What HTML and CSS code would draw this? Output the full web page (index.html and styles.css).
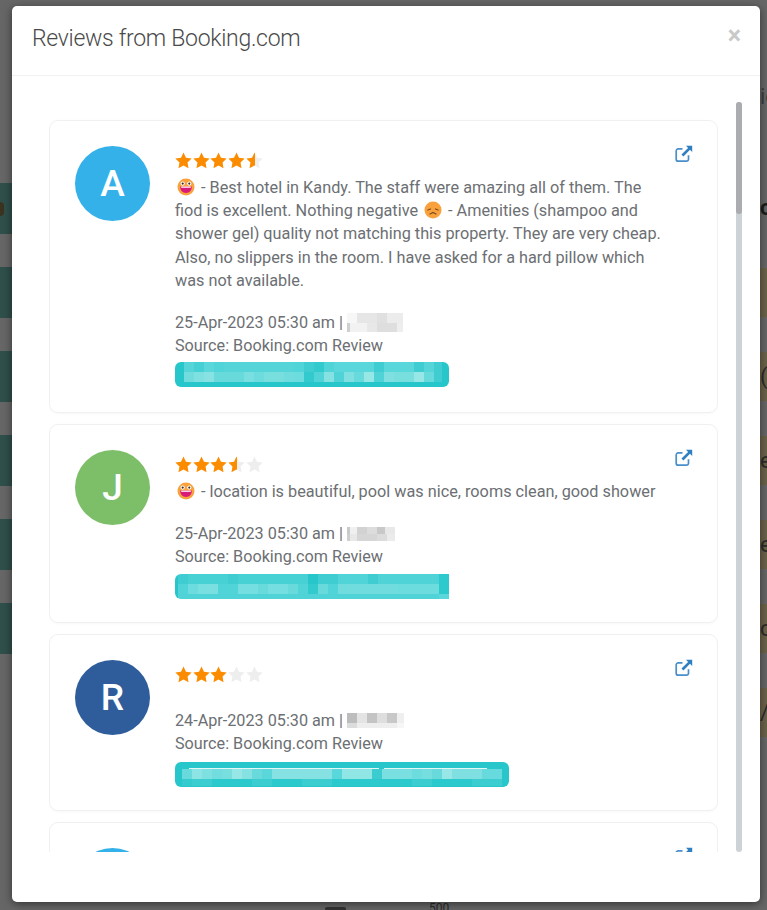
FILE: index.html
```html
<!DOCTYPE html>
<html>
  <head>
    <meta charset="UTF-8">
    <title>Reviews from Booking.com</title>
    <link rel="stylesheet" href="styles.css">
  </head>
  <body>
    <svg class="defs" width="0" height="0">
      <defs>
        <linearGradient id="halfFill">
          <stop offset="50%" stop-color="#fb8c00"></stop>
          <stop offset="50%" stop-color="#eeeeee"></stop>
        </linearGradient>
        <symbol id="star" viewBox="0 0 24 24">
          <path d="M12 .8l3.5 7.4 8 1.1-5.8 5.6 1.4 8L12 19l-7.1 3.9 1.4-8L.5 9.3l8-1.1z"></path>
        </symbol>
        <symbol id="share" viewBox="0 0 18 18">
          <path d="M13.5 10.2v4a2 2 0 0 1-2 2H3.2a2 2 0 0 1-2-2V5.9a2 2 0 0 1 2-2h4.3" fill="none" stroke="#4a8fc9" stroke-width="1.7"></path>
          <path d="M11 .8h6.2V7l-2.2-2.2-6.6 6.6-1.9-1.9 6.6-6.6z" fill="#2f7fc1"></path>
        </symbol>
        <symbol id="happy" viewBox="0 0 18 18">
          <circle cx="9" cy="9" r="8.5" fill="#f9a13c"></circle>
          <circle cx="5.7" cy="5.6" r="2.1" fill="#fff"></circle>
          <circle cx="12.3" cy="5.6" r="2.1" fill="#fff"></circle>
          <circle cx="5.7" cy="5.6" r="1.1" fill="#3a2a2a"></circle>
          <circle cx="12.3" cy="5.6" r="1.1" fill="#3a2a2a"></circle>
          <path d="M3.2 8.6h11.6c0 3.9-2.4 6.4-5.8 6.4s-5.8-2.5-5.8-6.4z" fill="#d81b7a"></path>
          <path d="M4.2 8.6h9.6v1.2H4.2z" fill="#fff"></path>
        </symbol>
        <symbol id="sad" viewBox="0 0 18 18">
          <circle cx="9" cy="9" r="8.5" fill="#f9a13c"></circle>
          <path d="M3.4 9.2L7 7.8M14.6 9.2L11 7.8M5.6 13.2l3.4-1.8 3.4 1.8" fill="none" stroke="#7a4a1c" stroke-width="1.1"></path>
        </symbol>
      </defs>
    </svg>

    <div class="page">
      <div class="stripes stripes-left">
        <div class="stripe"><span class="stripe-dot"></span></div>
        <div class="stripe"></div>
        <div class="stripe"></div>
        <div class="stripe"></div>
        <div class="stripe"></div>
        <div class="stripe"></div>
      </div>
      <div class="stripes stripes-right">
        <div class="peek">io</div>
        <div class="peek peek-head">ch</div>
        <div class="band"></div>
        <div class="band">(</div>
        <div class="band">ev</div>
        <div class="band">e</div>
        <div class="band">c</div>
        <div class="band">/</div>
      </div>
      <div class="page-foot"><span class="foot-chip"></span><span class="foot-num">500</span></div>
    </div>

    <div class="modal">
      <div class="modal-header">
        <h2 class="modal-title">Reviews from Booking.com</h2>
        <span class="modal-close">×</span>
      </div>
      <div class="modal-body">
        <div class="review-list">

          <div class="review">
            <div class="avatar avatar-sky">A</div>
            <div class="review-main">
              <div class="stars">
                <svg class="star on"><use href="#star"></use></svg>
                <svg class="star on"><use href="#star"></use></svg>
                <svg class="star on"><use href="#star"></use></svg>
                <svg class="star on"><use href="#star"></use></svg>
                <svg class="star half"><use href="#star"></use></svg>
              </div>
              <p class="review-text"><svg class="emoji"><use href="#happy"></use></svg> - Best hotel in Kandy. The staff were amazing all of them. The fiod is excellent. Nothing negative <svg class="emoji"><use href="#sad"></use></svg> - Amenities (shampoo and shower gel) quality not matching this property. They are very cheap. Also, no slippers in the room. I have asked for a hard pillow which was not available.</p>
              <div class="review-meta">25-Apr-2023 05:30 am | <span class="smudge smudge-a"></span></div>
              <div class="review-meta">Source: Booking.com Review</div>
              <div class="tag tag-a"></div>
            </div>
            <svg class="share"><use href="#share"></use></svg>
          </div>

          <div class="review">
            <div class="avatar avatar-green">J</div>
            <div class="review-main">
              <div class="stars">
                <svg class="star on"><use href="#star"></use></svg>
                <svg class="star on"><use href="#star"></use></svg>
                <svg class="star on"><use href="#star"></use></svg>
                <svg class="star half"><use href="#star"></use></svg>
                <svg class="star"><use href="#star"></use></svg>
              </div>
              <p class="review-text"><svg class="emoji"><use href="#happy"></use></svg> - location is beautiful, pool was nice, rooms clean, good shower</p>
              <div class="review-meta">25-Apr-2023 05:30 am | <span class="smudge smudge-j"></span></div>
              <div class="review-meta">Source: Booking.com Review</div>
              <div class="tag tag-j"></div>
            </div>
            <svg class="share"><use href="#share"></use></svg>
          </div>

          <div class="review">
            <div class="avatar avatar-navy">R</div>
            <div class="review-main">
              <div class="stars">
                <svg class="star on"><use href="#star"></use></svg>
                <svg class="star on"><use href="#star"></use></svg>
                <svg class="star on"><use href="#star"></use></svg>
                <svg class="star"><use href="#star"></use></svg>
                <svg class="star"><use href="#star"></use></svg>
              </div>
              <div class="review-empty"></div>
              <div class="review-meta">24-Apr-2023 05:30 am | <span class="smudge smudge-r"></span></div>
              <div class="review-meta">Source: Booking.com Review</div>
              <div class="tag tag-r"></div>
            </div>
            <svg class="share"><use href="#share"></use></svg>
          </div>

          <div class="review">
            <div class="avatar avatar-sky">A</div>
            <div class="review-main"></div>
            <svg class="share"><use href="#share"></use></svg>
          </div>

        </div>
        <div class="scrollbar"><div class="scrollbar-thumb"></div></div>
      </div>
    </div>
  </body>
</html>
```

FILE: styles.css
```css
html, body {
  height: 100%;
}

body {
  margin: 0;
  font-family: Roboto, "Liberation Sans", sans-serif;
  background-color: #666666;
  overflow: hidden;
}

.defs {
  position: absolute;
}

/* dimmed page behind the modal */
.page {
  display: flex;
  justify-content: space-between;
  height: 910px;
  position: relative;
  color: #222;
}

.stripes {
  display: flex;
  flex-direction: column;
}

.stripes-left {
  width: 12px;
  padding-top: 183px;
  gap: 33px;
}

.stripe {
  height: 51px;
  background-color: #2f4f4a;
  display: flex;
  align-items: center;
}

.stripe-dot {
  width: 4px;
  height: 14px;
  background-color: #3b3320;
  border-radius: 0 7px 7px 0;
}

.stripes-right {
  width: 7px;
  font-size: 22px;
  overflow: hidden;
}

.peek {
  height: 26px;
  margin-top: 84px;
  color: #3f3f3f;
  white-space: nowrap;
}

.peek-head {
  margin-bottom: 47px;
  margin-top: 85px;
  font-weight: 700;
  color: #1c1c1c;
}

.band {
  height: 49px;
  margin-bottom: 35px;
  background-color: #6b6249;
  color: #2b2b2b;
  line-height: 49px;
  white-space: nowrap;
}

.page-foot {
  position: absolute;
  left: 325px;
  top: 902px;
  display: flex;
  gap: 83px;
  font-size: 12px;
  color: #2a2a2a;
}

.foot-chip {
  width: 21px;
  height: 8px;
  margin-top: 5px;
  background-color: #333;
  border-radius: 2px;
}

.foot-num {
  line-height: 12px;
}

/* modal */
.modal {
  position: absolute;
  left: 12px;
  top: 6px;
  width: 748px;
  height: 896px;
  background-color: #fff;
  border-radius: 5px;
  box-shadow: 0 2px 8px rgba(0, 0, 0, 0.5);
  overflow: hidden;
}

.modal-header {
  display: flex;
  justify-content: space-between;
  height: 69px;
  padding: 0 19px 0 20px;
  border-bottom: 1px solid #f1f1f1;
}

.modal-title {
  margin: 18px 0 0;
  font-size: 23px;
  letter-spacing: -0.3px;
  line-height: 30px;
  font-weight: 300;
  color: #4a4a4a;
}

.modal-close {
  margin-top: 16px;
  font-size: 25px;
  line-height: 28px;
  font-weight: 700;
  color: #c9c9c9;
}

.modal-body {
  display: flex;
  align-items: flex-start;
  padding: 26px 18px 0 37px;
  justify-content: space-between;
}

.review-list {
  width: 669px;
  height: 750px;
  padding-top: 18px;
  box-sizing: border-box;
  overflow: hidden;
  display: flex;
  flex-direction: column;
  gap: 11px;
}

.scrollbar {
  width: 6px;
  height: 750px;
  background-color: #ccd2d6;
  border-radius: 3px;
}

.scrollbar-thumb {
  height: 112px;
  background-color: #abacb0;
  border-radius: 3px;
}

.review {
  display: flex;
  flex-shrink: 0;
  padding: 25px 25px 0 25px;
  border: 1px solid #f0f0f0;
  border-radius: 9px;
  box-shadow: 0 1px 3px rgba(0, 0, 0, 0.03);
}

.avatar {
  width: 75px;
  height: 75px;
  flex-shrink: 0;
  border-radius: 50%;
  color: #fff;
  font-size: 37px;
  font-weight: 500;
  line-height: 76px;
  text-align: center;
}

.avatar-sky { background-color: #35b1ea; }
.avatar-green { background-color: #7dbf69; }
.avatar-navy { background-color: #2f5d9b; }

.review-main {
  flex: 1;
  padding: 6px 0 25px 25px;
  min-width: 0;
}

.share {
  width: 18px;
  height: 18px;
  flex-shrink: 0;
  margin: -1px -1px 0 0;
}

.stars {
  display: flex;
  gap: 0.7px;
  height: 17px;
}

.star {
  width: 17px;
  height: 17px;
  fill: #eeeeee;
}

.star.on { fill: #fb8c00; }
.star.half { fill: url(#halfFill); }

.review-text {
  width: 490px;
  margin: 7px 0 19px;
  font-size: 16.25px;
  line-height: 23.2px;
  color: #6c6f73;
}

.review-empty {
  height: 26px;
}

.emoji {
  width: 18px;
  height: 18px;
  margin: 0 2px 0 2px;
  vertical-align: -3px;
}

.review-meta {
  font-size: 16.2px;
  line-height: 23px;
  color: #6c6f73;
  white-space: nowrap;
}

.smudge {
  display: inline-block;
  background-repeat: no-repeat;
}

.smudge-a {
  width: 56px;
  height: 19px;
  vertical-align: -4px;
  background-image:
    linear-gradient(90deg, #f7f7f7 0 10px, #e6e6e6 10px 30px, #e0e0e0 30px 40px, #ececec 40px),
    linear-gradient(90deg, #cfcfcf 0 3px, #f2f2f2 3px 20px, #e8e8e8 20px 30px, #dedede 30px 50px, #eeeeee 50px);
  background-size: 100% 10px, 100% 9px;
  background-position: 0 0, 0 10px;
}

.smudge-j {
  width: 48px;
  height: 14px;
  vertical-align: -2px;
  background-image:
    linear-gradient(90deg, #c9c9c9 0 3px, #f0f0f0 3px 10px, #d2d2d2 10px 20px, #dcdcdc 20px 30px, #c8c8c8 30px 38px, #e8e8e8 38px),
    linear-gradient(90deg, #cfcfcf 0 3px, #e8e8e8 3px 10px, #d6d6d6 10px 30px, #dcdcdc 30px 40px, #ebebeb 40px);
  background-size: 100% 7px, 100% 7px;
  background-position: 0 0, 0 7px;
}

.smudge-r {
  width: 57px;
  height: 15px;
  vertical-align: -2px;
  background-image:
    linear-gradient(90deg, #bdbdbd 0 10px, #e4e4e4 10px 20px, #c4c4c4 20px 30px, #dedede 30px 40px, #c8c8c8 40px 50px, #efefef 50px),
    linear-gradient(90deg, #dcdcdc 0 10px, #eeeeee 10px 50px, #f6f6f6 50px);
  background-size: 100% 10px, 100% 5px;
  background-position: 0 0, 0 10px;
}

/* pixelated labels, two rows of 10px blocks */
.tag {
  height: 25px;
  margin-top: 5px;
  border-radius: 6px;
  background-color: #26c6cb;
  background-repeat: no-repeat;
}

.tag-a {
  width: 274px;
  background-image:
    linear-gradient(90deg, #55d5d8 0 10px, #45d0d3 10px 20px, #5ad7da 20px 30px, #50d4d7 30px 40px, #55d5d8 40px 110px, #50d4d7 110px 120px, #40cdd1 120px 130px, #33cacd 130px 140px, #50d4d7 140px 150px, #5ad7da 150px 190px, #3fcdd1 190px 200px, #5ad7da 200px 230px, #3fcdd1 230px 240px, #55d5d8 240px 250px, #40cdd1 250px 258px),
    linear-gradient(90deg, #70dcde 0 10px, #7fe0e1 10px 20px, #88e2e3 20px 30px, #68dadc 30px 60px, #7adfe0 60px 70px, #6cdcde 70px 80px, #78dede 80px 100px, #70dcde 100px 110px, #6cdcde 110px 120px, #33cacd 120px 130px, #50d4d7 130px 140px, #85e1e2 140px 150px, #4fd3d6 150px 160px, #80e0e1 160px 170px, #68dadc 170px 180px, #97e7e7 180px 190px, #4fd3d6 190px 200px, #80e0e1 200px 210px, #78dede 210px 230px, #97e7e7 230px 240px, #68dadc 240px 250px, #40cdd1 250px 258px);
  background-size: 258px 10px, 258px 10px;
  background-position: 9px 0, 9px 10px;
}

.tag-j {
  width: 274px;
  margin: 6px 0 -2px;
  border-radius: 6px 0 0 6px;
  background-image:
    linear-gradient(90deg, #3fcdd1 0 10px, #48d1d4 10px 50px, #3fcdd1 50px 60px, #48d1d4 60px 130px, #26c6cb 130px 140px, #3fcdd1 140px 160px, #50d4d7 160px 190px, #3fcdd1 190px 200px, #4fd3d6 200px 261px, #2ccacd 261px),
    linear-gradient(90deg, #50d4d7 0 10px, #6cdcde 10px 20px, #7adfe0 20px 40px, #50d4d7 40px 60px, #74dee0 60px 80px, #68dadc 80px 90px, #74dee0 90px 110px, #68dadc 110px 120px, #50d4d7 120px 130px, #33cacd 130px 140px, #68dadc 140px 150px, #50d4d7 150px 160px, #70dcde 160px 220px, #6cdcde 220px 261px, #2ccacd 261px),
    linear-gradient(90deg, #4fd3d6 0 261px, #5ad7da 261px);
  background-size: 271px 10px, 271px 10px, 271px 5px;
  background-position: 3px 0, 3px 10px, 3px 20px;
}

.tag-r {
  width: 334px;
  margin: 7px 0 -2px;
  background-image:
    linear-gradient(90deg, #e2f8f8 0 190px, transparent 190px 195px, #e2f8f8 195px),
    linear-gradient(90deg, #68dadc 0 10px, #8ce4e4 10px 20px, #7fe0e1 20px 30px, #72dddf 30px 40px, #78dede 40px 50px, #97e7e7 50px 60px, #85e1e2 60px 70px, #68dadc 70px 80px, #5ad7da 80px 90px, #85e1e2 90px 150px, #5ad7da 150px 160px, #90e5e5 160px 190px, #3acccf 190px 200px, #7adfe0 200px 230px, #6cdcde 230px 240px, #76dede 240px 250px, #68dadc 250px 260px, #97e7e7 260px 270px, #80e0e1 270px 300px, #66dadc 300px),
    linear-gradient(90deg, #33cbce 0 10px, #3ccdd0 10px 30px, #2ccacd 30px 70px, #3ccdd0 70px 90px, #2ccacd 90px 120px, #3ccdd0 120px 150px, #2ccacd 150px 230px, #3ccdd0 230px 250px, #2ccacd 250px 290px, #3ccdd0 290px);
  background-size: 298px 1px, 320px 10px, 320px 7px;
  background-position: 14px 6px, 7px 7px, 7px 17px;
}
```
